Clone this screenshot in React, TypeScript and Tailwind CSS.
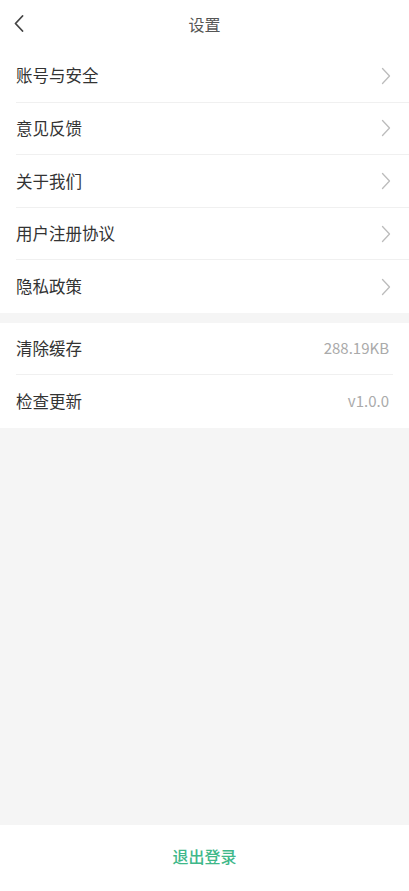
const mainItems = ["账号与安全", "意见反馈", "关于我们", "用户注册协议", "隐私政策"];

const infoItems = [
  { label: "清除缓存", value: "288.19KB" },
  { label: "检查更新", value: "v1.0.0" },
];

function BackArrow() {
  return (
    <svg width="10" height="17" viewBox="0 0 10 17" fill="none">
      <path d="M8.5 1L1.5 8.5L8.5 16" stroke="#444" strokeWidth="1.8" strokeLinecap="round" strokeLinejoin="round" />
    </svg>
  );
}

function Arrow() {
  return (
    <svg width="10" height="18" viewBox="0 0 10 18" fill="none">
      <path d="M1.5 1.5L8.5 9L1.5 16.5" stroke="#bcbcbc" strokeWidth="1.3" strokeLinecap="round" strokeLinejoin="round" />
    </svg>
  );
}

export default function App() {
  return (
    <div
      className="min-h-[891px] flex flex-col bg-[#f5f5f5] text-[#333]"
      style={{ fontFamily: '"Noto Sans CJK SC", "Noto Sans", sans-serif' }}
    >
      {/* Header */}
      <div className="h-[50px] bg-white grid grid-cols-[48px_1fr_48px] items-center">
        <div className="flex items-center pl-[14px] pb-[3px]">
          <BackArrow />
        </div>
        <div className="text-center text-[16px] text-[#555] pb-[3px]">设置</div>
        <div />
      </div>

      {/* Links */}
      <div className="bg-white">
        {mainItems.map((item, i) => (
          <div key={item} className="pl-4">
            <div
              className={`h-[52.6px] flex items-center justify-between pr-[18px] ${
                i < mainItems.length - 1 ? "border-b border-[#f0f0f0]" : ""
              }`}
            >
              <span className="text-[16.5px]">{item}</span>
              <Arrow />
            </div>
          </div>
        ))}
      </div>

      {/* Info */}
      <div className="bg-white mt-[10px] px-4">
        {infoItems.map((item, i) => (
          <div
            key={item.label}
            className={`h-[52.5px] flex items-center justify-between pr-[4px] ${
              i === 0 ? "border-b border-[#f0f0f0]" : ""
            }`}
          >
            <span className="text-[16.5px]">{item.label}</span>
            <span className="text-[15px] text-[#aaa]">{item.value}</span>
          </div>
        ))}
      </div>

      <div className="flex-1" />

      {/* Logout */}
      <div className="h-[66px] bg-white flex items-center justify-center pb-[4px]">
        <span className="text-[16px] font-medium text-[#3fb88a]">退出登录</span>
      </div>
    </div>
  );
}
